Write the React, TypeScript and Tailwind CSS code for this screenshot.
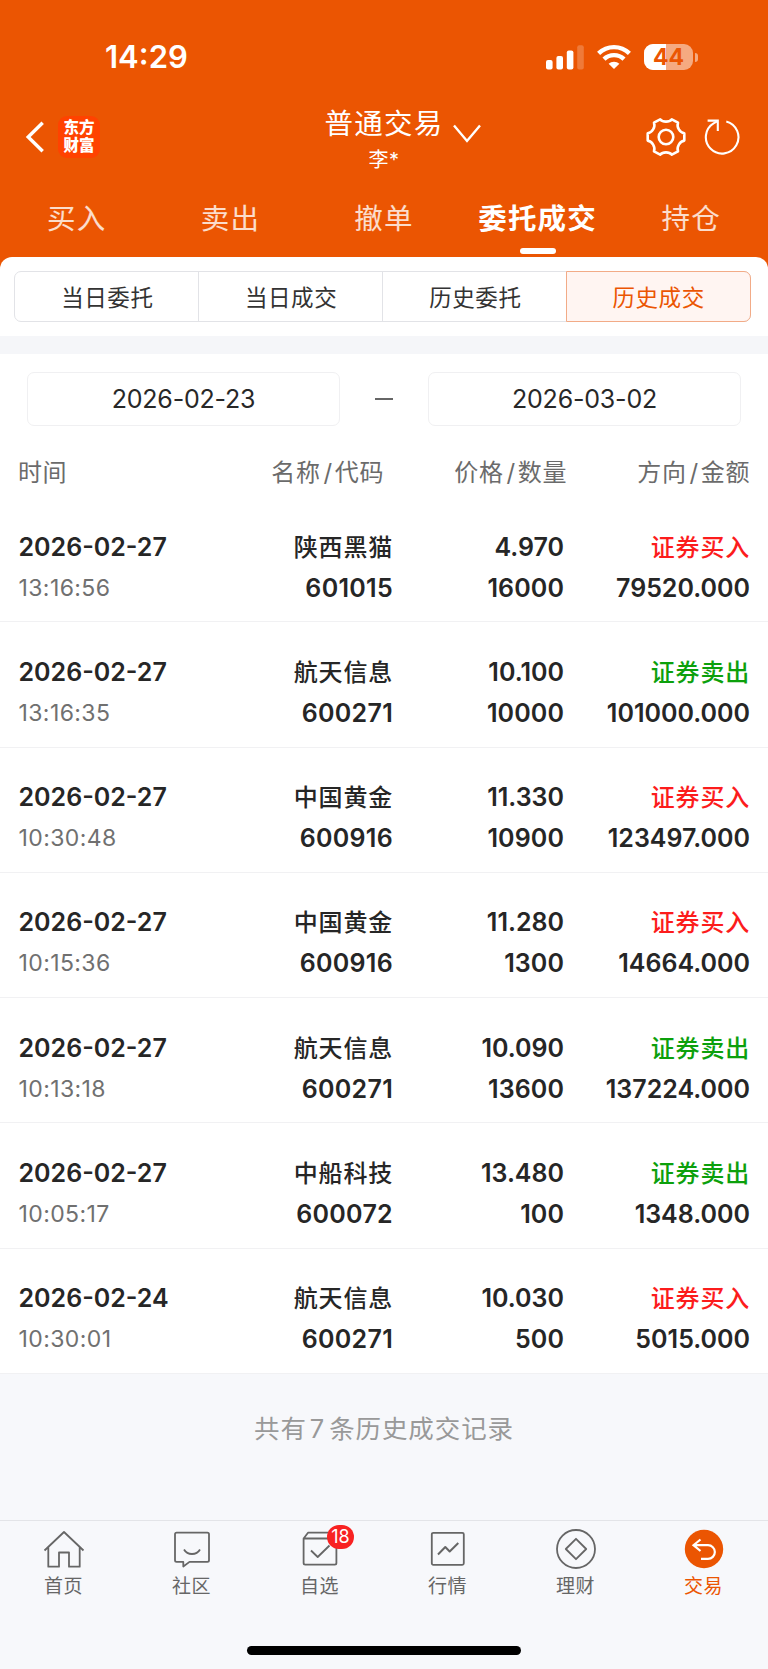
import { useState } from "react";
import type { ReactNode } from "react";

interface Deal {
  date: string;
  time: string;
  name: string;
  code: string;
  price: string;
  qty: string;
  side: "buy" | "sell";
  amount: string;
}

const TABS = ["买入", "卖出", "撤单", "委托成交", "持仓"];
const SEGMENTS = ["当日委托", "当日成交", "历史委托", "历史成交"];

const DEALS: Deal[] = [
  { date: "2026-02-27", time: "13:16:56", name: "陕西黑猫", code: "601015", price: "4.970", qty: "16000", side: "buy", amount: "79520.000" },
  { date: "2026-02-27", time: "13:16:35", name: "航天信息", code: "600271", price: "10.100", qty: "10000", side: "sell", amount: "101000.000" },
  { date: "2026-02-27", time: "10:30:48", name: "中国黄金", code: "600916", price: "11.330", qty: "10900", side: "buy", amount: "123497.000" },
  { date: "2026-02-27", time: "10:15:36", name: "中国黄金", code: "600916", price: "11.280", qty: "1300", side: "buy", amount: "14664.000" },
  { date: "2026-02-27", time: "10:13:18", name: "航天信息", code: "600271", price: "10.090", qty: "13600", side: "sell", amount: "137224.000" },
  { date: "2026-02-27", time: "10:05:17", name: "中船科技", code: "600072", price: "13.480", qty: "100", side: "sell", amount: "1348.000" },
  { date: "2026-02-24", time: "10:30:01", name: "航天信息", code: "600271", price: "10.030", qty: "500", side: "buy", amount: "5015.000" },
];

function StatusBar() {
  return (
    <div className="flex h-[114px] items-center justify-between pl-[105px] pr-[70px]">
      <span className="mb-[1px] text-[31px] leading-none font-semibold">14:29</span>
      <div className="flex items-center">
        <svg width="38" height="26" viewBox="0 0 38 26" fill="#fff">
          <rect x="0" y="16" width="6.6" height="9.4" rx="2" />
          <rect x="10.4" y="12" width="6.6" height="13.4" rx="2" />
          <rect x="20.8" y="6.6" width="6.6" height="18.8" rx="2" />
          <rect x="31.2" y="1.2" width="6.6" height="24.2" rx="2" opacity="0.22" />
        </svg>
        <svg className="ml-[13px]" width="34" height="26" viewBox="0 0 34 26" fill="none" stroke="#fff" strokeWidth="4.4">
          <path d="M1.6 9.4a22 22 0 0 1 30.8 0" />
          <path d="M7 15.2a14.4 14.4 0 0 1 20 0" />
          <path d="M11.6 19.8a7.8 7.8 0 0 1 10.8 0L17 25z" fill="#fff" stroke="none" />
        </svg>
        <div className="relative ml-[13px] flex h-[26px] w-[49px] items-center justify-center overflow-hidden rounded-[9px] bg-white/50">
          <div className="absolute inset-y-0 left-0 w-[22px] bg-white" />
          <span className="relative text-[23px] leading-none font-bold text-[#eb5502]">44</span>
        </div>
        <div className="ml-[2px] h-[9px] w-[3px] rounded-r-full bg-white/50" />
      </div>
    </div>
  );
}

function TitleBar() {
  return (
    <div className="grid h-[66px] grid-cols-[1fr_auto_1fr] items-center">
      <div className="flex items-center pl-[25px] pb-[20px]">
        <svg width="20" height="32" viewBox="0 0 20 32" fill="none" stroke="#fff" strokeWidth="3.4">
          <path d="M17.7 1.8 3.2 16 17.7 30.2" />
        </svg>
        <div className="mt-[-1px] ml-[13px] flex h-[42px] w-[42px] flex-col items-center justify-center rounded-[9px] bg-[#ff4200] text-[15.5px] leading-[17.5px] font-black">
          <span>东方</span>
          <span>财富</span>
        </div>
      </div>
      <div className="relative flex flex-col items-center self-start">
        <span className="mt-[-8px] text-[28.5px] leading-[36px] tracking-[1.2px]">普通交易</span>
        <span className="mt-[7px] text-[20px] leading-[22px] tracking-[0.5px]">李*</span>
        <svg className="absolute top-[10px] left-[127px]" width="30" height="20" viewBox="0 0 30 20" fill="none" stroke="#fff" strokeWidth="2.4">
          <path d="M2 1.5 15 17 28 1.5" />
        </svg>
      </div>
      <div className="flex items-center justify-end gap-[17px] pr-[28px] pb-[20px]">
        <svg width="42" height="42" viewBox="0 0 42 42" fill="none" stroke="#fff" strokeWidth="2.6" strokeLinejoin="round">
          <circle cx="21" cy="21" r="7.3" />
          <path d="M15.2 3.3C17.8 6.4 24.2 6.4 26.8 3.3L33 6.6C31.4 11.2 34.8 16.6 39.3 17.4V24.6C34.8 25.4 31.4 30.8 33 35.4L26.8 38.7C24.2 35.6 17.8 35.6 15.2 38.7L9 35.4C10.6 30.8 7.2 25.4 2.7 24.6V17.4C7.2 16.6 10.6 11.2 9 6.6Z" />
        </svg>
        <svg width="36" height="38" viewBox="0 0 36 38" fill="none" stroke="#fff" strokeWidth="2.1">
          <path d="M22.3 3.5A16.3 16.3 0 1 1 9.9 5.2Q11.8 4 13.7 3.2" />
          <path d="M3.6 2.6H13.8V13" />
        </svg>
      </div>
    </div>
  );
}

function DateBox({ value }: { value: string }) {
  return (
    <button className="h-[54px] w-[313px] rounded-[7px] border border-[#f0f0f2] pt-[2px] text-[25px] leading-none tracking-[-0.2px] text-[#282828]">
      {value}
    </button>
  );
}

function PairLabel({ first, second }: { first: string; second: string }) {
  return (
    <span className="text-right">
      {first}
      <span className="mr-[2px] ml-[3px]">/</span>
      {second}
    </span>
  );
}

function DealRow({ deal }: { deal: Deal }) {
  return (
    <li className="grid h-[125.25px] grid-cols-[200px_193px_171px_186px] border-b border-[#f1f1f3] pt-[29.5px] text-[25px] leading-[41.4px] font-semibold text-[#262626]">
      <div className="flex flex-col pl-[18.5px]">
        <span className="h-[41px]">{deal.date}</span>
        <span className="h-[41px] text-[23px] font-normal tracking-[0.4px] text-[#707070]">{deal.time}</span>
      </div>
      <div className="flex flex-col items-end">
        <span className="h-[41px] text-[24px] font-medium tracking-[0.8px]">{deal.name}</span>
        <span className="h-[41px] tracking-[0.3px]">{deal.code}</span>
      </div>
      <div className="flex flex-col items-end">
        <span className="h-[41px]">{deal.price}</span>
        <span className="h-[41px] tracking-[0.1px]">{deal.qty}</span>
      </div>
      <div className="flex flex-col items-end">
        <span className={`h-[41px] text-[24px] font-medium tracking-[0.8px] ${deal.side === "buy" ? "text-[#fc1c1c]" : "text-[#0ca00c]"}`}>
          {deal.side === "buy" ? "证券买入" : "证券卖出"}
        </span>
        <span className="h-[41px]">{deal.amount}</span>
      </div>
    </li>
  );
}

function NavItem({ label, active, badge, children }: { label: string; active?: boolean; badge?: string; children: ReactNode }) {
  return (
    <button className={`flex flex-col items-center pt-[7px] ${active ? "text-[#eb5502]" : "text-[#666]"}`}>
      <span className="relative">
        <svg width="42" height="42" viewBox="0 0 42 42" fill="none" stroke="currentColor" strokeWidth="1.8" strokeLinejoin="round">
          {children}
        </svg>
        {badge && (
          <span className="absolute top-[-3px] left-[28px] flex h-[24px] w-[27px] items-center justify-center rounded-full bg-[#f82222] text-[18px] leading-none text-white">
            {badge}
          </span>
        )}
      </span>
      <span className="mt-[5px] mr-[1px] text-[19px] leading-[24px] tracking-[0.6px]">{label}</span>
    </button>
  );
}

export default function App() {
  const [tab, setTab] = useState(3);
  const [segment, setSegment] = useState(3);

  return (
    <div className="flex h-[1669px] w-[768px] flex-col overflow-hidden bg-[#f7f8fb] font-['Inter','Noto_Sans_CJK_SC',sans-serif]">
      <header className="h-[271px] shrink-0 bg-[#eb5502] text-white">
        <StatusBar />
        <TitleBar />
        <nav className="grid grid-cols-5">
          {TABS.map((t, i) => (
            <button
              key={t}
              onClick={() => setTab(i)}
              className={`flex h-[77px] flex-col items-center pt-[21px] text-[28.5px] leading-[36px] tracking-[1.2px] ${i === tab ? "font-bold" : "text-white/80"}`}
            >
              {t}
              {i === tab && <span className="mt-[11px] h-[6px] w-[36px] rounded-[3px] bg-white" />}
            </button>
          ))}
        </nav>
      </header>

      {/* Sheet overlapping the header */}
      <main className="relative mt-[-14px] shrink-0 rounded-t-[12px] bg-white">
        <div className="h-[79px] pt-[14px] pr-[17px] pl-[14px]">
          <div className="grid h-[51px] grid-cols-4 rounded-[7px] border border-[#e2e3e7]">
            {SEGMENTS.map((s, i) => (
              <button
                key={s}
                onClick={() => setSegment(i)}
                className={
                  i === segment
                    ? "-my-px -mr-px rounded-r-[7px] border border-[#f2ab87] bg-[#fff5f2] pt-[2px] text-[22.5px] tracking-[0.6px] text-[#eb5502]"
                    : "border-r border-[#e2e3e7] pt-[2px] pl-[2px] text-[22.5px] tracking-[0.6px] text-[#333] nth-3:border-r-0"
                }
              >
                {s}
              </button>
            ))}
          </div>
        </div>
        <div className="h-[18px] bg-[#f5f6f9]" />

        <div className="flex h-[89px] items-center justify-between px-[27px]">
          <DateBox value="2026-02-23" />
          <span className="h-[2px] w-[18px] bg-[#666]" />
          <DateBox value="2026-03-02" />
        </div>

        <div className="grid h-[54px] grid-cols-[200px_184px_183px_183px] pt-[12px] text-[24px] leading-[36px] tracking-[0.6px] text-[#6b6b6b]">
          <span className="pl-[18px]">时间</span>
          <PairLabel first="名称" second="代码" />
          <PairLabel first="价格" second="数量" />
          <PairLabel first="方向" second="金额" />
        </div>

        <ul>
          {DEALS.map((d, i) => (
            <DealRow key={i} deal={d} />
          ))}
        </ul>
      </main>

      <p className="flex-1 pt-[37px] text-center text-[25.5px] leading-[36px] tracking-[0.9px] text-[#999]">
        共有<span className="mr-[4px] ml-[3px]">7</span>条历史成交记录
      </p>

      <footer className="h-[149px] shrink-0 border-t border-[#e3e4e8]">
        <div className="grid h-[125px] grid-cols-6">
          <NavItem label="首页">
            <path d="M1.5 22.5 21 4l19.5 18.5M5.3 19.5V38.7H16V24.5H26V38.7H36.7V19.5" />
          </NavItem>
          <NavItem label="社区">
            <path d="M5.6 4.7H36.4Q38 4.7 38 6.3V32.3Q38 33.9 36.4 33.9H18.5L12.3 38.5V33.9H5.6Q4 33.9 4 32.3V6.3Q4 4.7 5.6 4.7Z" />
            <path d="M13 21.5C16.5 27.5 25.5 27.5 29 21.5" />
          </NavItem>
          <NavItem label="自选" badge="18">
            <path d="M4.6 10.5 9 4.7H33L37.4 10.5M4.6 10.5H37.4V35Q37.4 36.6 35.8 36.6H6.2Q4.6 36.6 4.6 35ZM12 22.5 18.7 29 30.5 17.5" />
          </NavItem>
          <NavItem label="行情">
            <rect x="4.8" y="4.8" width="32" height="32" rx="1.5" />
            <path d="M11 26.5 18.3 19 22.7 23.5 31.3 15" strokeWidth="2" />
          </NavItem>
          <NavItem label="理财">
            <circle cx="21" cy="21" r="19" />
            <path d="M21 10.8 31.2 21 21 31.2 10.8 21Z" />
          </NavItem>
          <NavItem label="交易" active>
            <circle cx="21" cy="21" r="19.2" fill="currentColor" stroke="none" />
            <path d="M17.5 11.5 10.5 17.2 17.5 23M10.5 17.2H25A6.7 6.7 0 0 1 25 30.9H18" stroke="#fff" strokeWidth="2.2" strokeLinejoin="miter" />
          </NavItem>
        </div>
        <div className="mx-auto h-[9px] w-[274px] rounded-full bg-black" />
      </footer>
    </div>
  );
}
